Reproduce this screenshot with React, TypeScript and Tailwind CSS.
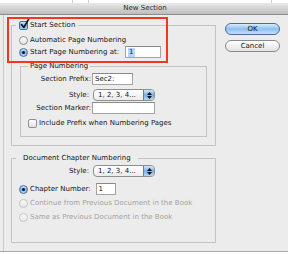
import React from "react";

const font = { fontFamily: '"DejaVu Sans", "Liberation Sans", sans-serif' };

function Check({ checked }: { checked?: boolean }) {
  return (
    <span className="relative inline-block w-[9px] h-[9px] shrink-0">
      <span
        className={
          checked
            ? "absolute inset-0 rounded-[2px] border border-[#4b6d9e] bg-gradient-to-b from-[#cfe6fb] via-[#7fb6ee] to-[#a9d3fa]"
            : "absolute inset-0 rounded-[2px] border border-[#8f8f8f] bg-gradient-to-b from-[#ffffff] to-[#e2e2e2]"
        }
      />
      {checked && (
        <svg className="absolute left-[1px] top-[-3px]" width="10" height="11" viewBox="0 0 10 11">
          <path d="M1.5 6.5 L3.8 9.5 L8.8 0.8" fill="none" stroke="#111" strokeWidth="1.6" strokeLinecap="round" strokeLinejoin="round" />
        </svg>
      )}
    </span>
  );
}

function Radio({ on, disabled }: { on?: boolean; disabled?: boolean }) {
  if (on)
    return (
      <span className="flex items-center justify-center w-[9px] h-[9px] shrink-0 rounded-full border border-[#4b6d9e] bg-gradient-to-b from-[#cfe6fb] via-[#74aeea] to-[#b2d8fb]">
        <span className="w-[3px] h-[3px] rounded-full bg-[#111]" />
      </span>
    );
  return (
    <span
      className={
        disabled
          ? "inline-block w-[9px] h-[9px] shrink-0 rounded-full border border-[#c4c4c4] bg-gradient-to-b from-[#f8f8f8] to-[#e8e8e8]"
          : "inline-block w-[9px] h-[9px] shrink-0 rounded-full border border-[#8f8f8f] bg-gradient-to-b from-[#ffffff] to-[#e2e2e2]"
      }
    />
  );
}

function Select() {
  return (
    <div className="flex h-[12px] w-[62px] rounded-[4px] border border-[#8f8f8f] overflow-hidden bg-gradient-to-b from-[#ffffff] to-[#ececec]">
      <span className="flex-1 pl-[4px] leading-[10px] text-[7px]">1, 2, 3, 4...</span>
      <span className="flex flex-col items-center justify-center gap-[1px] w-[11px] border-l border-[#5c7fb0] bg-gradient-to-b from-[#cfe6fb] via-[#76b0ec] to-[#b0d6fb]">
        <svg width="5" height="3" viewBox="0 0 5 3"><path d="M0 3 L2.5 0 L5 3 Z" fill="#111" /></svg>
        <svg width="5" height="3" viewBox="0 0 5 3"><path d="M0 0 L2.5 3 L5 0 Z" fill="#111" /></svg>
      </span>
    </div>
  );
}

function Input({ w, value, hl }: { w: string; value?: string; hl?: boolean }) {
  return (
    <div className={`flex items-center h-[12px] ${w} bg-white border border-[#a3a3a3] border-t-[#8a8a8a] pl-[2px]`}>
      {value && (
        <span className={hl ? "bg-[#b5d5ff] px-[1px] leading-[9px] text-[7px]" : "leading-[9px] text-[7px]"}>{value}</span>
      )}
    </div>
  );
}

export default function App() {
  return (
    <div className="w-[288px] h-[254px] bg-white overflow-hidden relative text-[#141414] text-[7px]" style={font}>
      {/* top strip */}
      <div className="h-[3px] bg-white flex">
        <div className="w-[72px]" />
        <div className="w-[1px] bg-[#d9c8f2]" />
        <div className="w-[15px]" />
        <div className="w-[1px] bg-[#d9c8f2]" />
        <div className="w-[182px]" />
        <div className="w-[1px] bg-[#d9c8f2]" />
      </div>
      {/* window */}
      <div className="h-[249px] flex flex-col bg-[#ececec] border-b border-[#a9a9a9]">
        <div className="h-[12px] shrink-0 flex items-center justify-center bg-gradient-to-b from-[#e9e9e9] to-[#bdbdbd] border-b border-[#8d8d8d]">
          <span className="text-[7px] leading-none text-[#2a2a2a] pl-[2px]">New Section</span>
        </div>
        <div className="flex-1 flex ml-[3px] border-l border-[#c9c9c9]">
          {/* left column */}
          <div className="pl-[7px] w-[213px]">
            <fieldset className="mt-[5px] border border-[#c3c3c3] w-[205px] pb-[8px]">
              <legend className="ml-[4px] px-[3px] flex items-center gap-[2px] h-[10px]">
                <Check checked />
                <span className="leading-none">Start Section</span>
              </legend>
              <div className="mt-[5px] ml-[7px] h-[10px] flex items-center gap-[2px]">
                <Radio />
                <span className="leading-none">Automatic Page Numbering</span>
              </div>
              <div className="mt-[1px] ml-[7px] h-[12px] flex items-center gap-[2px]">
                <Radio on />
                <span className="leading-none">Start Page Numbering at:</span>
                <div className="ml-[4px]">
                  <Input w="w-[36px]" value="1" hl />
                </div>
              </div>
              <fieldset className="mt-[3px] ml-[8px] w-[187px] border border-[#c3c3c3] pb-[8px]">
                <legend className="ml-[7px] px-[2px] h-[10px] flex items-center leading-none">Page Numbering</legend>
                <div className="mt-[2px] h-[12px] flex items-center">
                  <span className="w-[70px] text-right leading-none">Section Prefix:</span>
                  <div className="ml-[1px]">
                    <Input w="w-[41px]" value="Sec2:" />
                  </div>
                </div>
                <div className="mt-[4px] h-[12px] flex items-center">
                  <span className="w-[68px] text-right leading-none">Style:</span>
                  <div className="ml-[4px]">
                    <Select />
                  </div>
                </div>
                <div className="mt-[1px] h-[12px] flex items-center">
                  <span className="w-[70px] text-right leading-none">Section Marker:</span>
                  <div className="ml-[1px]">
                    <Input w="w-[63px]" />
                  </div>
                </div>
                <div className="mt-[4px] ml-[7px] h-[10px] flex items-center gap-[2px]">
                  <Check />
                  <span className="leading-none">Include Prefix when Numbering Pages</span>
                </div>
              </fieldset>
            </fieldset>

            <fieldset className="mt-[7px] border border-[#c3c3c3] w-[205px] pb-[20px]">
              <legend className="ml-[4px] px-[7px] h-[10px] flex items-center leading-none">Document Chapter Numbering</legend>
              <div className="mt-[2px] h-[12px] flex items-center">
                <span className="w-[77px] text-right leading-none">Style:</span>
                <div className="ml-[4px]">
                  <Select />
                </div>
              </div>
              <div className="mt-[6px] ml-[7px] h-[12px] flex items-center gap-[2px]">
                <Radio on />
                <span className="leading-none">Chapter Number:</span>
                <div className="ml-[3px]">
                  <Input w="w-[20px]" value="1" />
                </div>
              </div>
              <div className="mt-[3px] ml-[7px] h-[10px] flex items-center gap-[2px] text-[#a3a3a3]">
                <Radio disabled />
                <span className="leading-none">Continue from Previous Document in the Book</span>
              </div>
              <div className="mt-[4px] ml-[7px] h-[10px] flex items-center gap-[2px] text-[#a3a3a3]">
                <Radio disabled />
                <span className="leading-none">Same as Previous Document in the Book</span>
              </div>
            </fieldset>
          </div>
          {/* right column */}
          <div className="pl-[8px] pt-[8px] flex flex-col gap-[5px]">
            <button className="w-[55px] h-[12px] rounded-full border border-[#4a6a9c] bg-gradient-to-b from-[#d9ecfc] via-[#8cbff0] to-[#c3e2fc] text-[7px] leading-none text-[#111]">
              OK
            </button>
            <button className="w-[55px] h-[12px] rounded-full border border-[#8a8a8a] bg-gradient-to-b from-[#ffffff] to-[#e3e3e3] text-[7px] leading-none text-[#111]">
              Cancel
            </button>
          </div>
        </div>
      </div>
      {/* annotation */}
      <div className="absolute left-[7px] top-[17px] w-[161px] h-[46px] border-2 border-[#f2361f]" />
    </div>
  );
}
